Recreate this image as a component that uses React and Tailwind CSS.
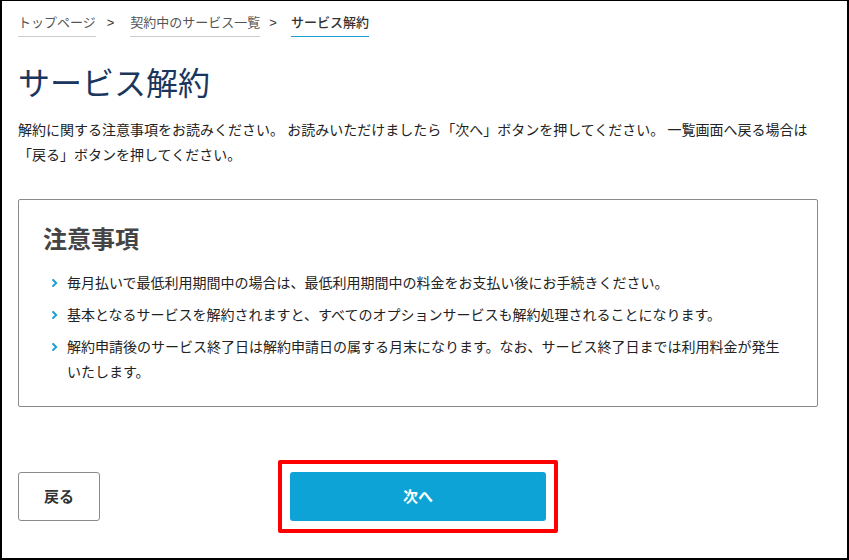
import React from 'react'

const NOTES = [
  '毎月払いで最低利用期間中の場合は、最低利用期間中の料金をお支払い後にお手続きください。',
  '基本となるサービスを解約されますと、すべてのオプションサービスも解約処理されることになります。',
  '解約申請後のサービス終了日は解約申請日の属する月末になります。なお、サービス終了日までは利用料金が発生いたします。',
]

function Chevron() {
  return (
    <svg width="6" height="8" viewBox="0 0 6 8" fill="none" className="mt-[9px] ml-[9px] mr-[9px] flex-shrink-0">
      <path d="M1.2 1l3 3-3 3" stroke="#1a9ed6" strokeWidth="1.9" strokeLinecap="square" />
    </svg>
  )
}

function Breadcrumb() {
  return (
    <nav className="flex items-end pt-[11px] text-[13px] leading-5">
      <span className="pb-1 border-b border-[#cccccc] text-[#555]">トップページ</span>
      <span className="pb-1 ml-[11px] mr-[16px] font-['Liberation_Sans',sans-serif] text-[#333]">&gt;</span>
      <span className="pb-1 border-b border-[#cccccc] text-[#555]">契約中のサービス一覧</span>
      <span className="pb-1 ml-[9px] mr-[14px] font-['Liberation_Sans',sans-serif] text-[#333]">&gt;</span>
      <span className="pb-1 border-b border-[#1a9ed6] text-[#333] font-medium">サービス解約</span>
    </nav>
  )
}

export default function App() {
  return (
    <div className="w-[849px] h-[560px] overflow-hidden bg-white border-t border-l-2 border-r-2 border-b-2 border-black font-['Noto_Sans_CJK_JP','Noto_Sans',sans-serif]">
      <div className="ml-4 w-[800px]">
        <Breadcrumb />

        <h1 className="mt-5 text-[32px] leading-[48px] font-normal text-[#1b365d]">サービス解約</h1>

        <p className="mt-3 text-[14px] leading-[25px] text-[#222]">
          解約に関する注意事項をお読みください。 お読みいただけましたら「次へ」ボタンを押してください。 一覧画面へ戻る場合は「戻る」ボタンを押してください。
        </p>

        <section className="mt-8 border border-[#8a8a8a] rounded-[2px] px-6 pt-5 pb-[22px]">
          <h2 className="text-[24px] leading-9 font-bold text-[#444]">注意事項</h2>
          <ul className="mt-[14px] flex flex-col gap-[7px]">
            {NOTES.map(note => (
              <li key={note} className="flex items-start text-[14px] leading-[25px] text-[#222]">
                <Chevron />
                <span>{note}</span>
              </li>
            ))}
          </ul>
        </section>

        <div className="mt-[53px] grid grid-cols-[1fr_auto_1fr] items-center">
          <button className="justify-self-start w-[82px] h-[49px] border border-[#8a8a8a] rounded-[3px] bg-white text-[15px] font-bold text-[#333]">
            戻る
          </button>
          <div className="border-4 border-[#ff0000] rounded-[2px] p-2">
            <button className="w-[256px] h-[49px] rounded-[3px] bg-[#0ea3d6] text-[15px] font-bold text-white">
              次へ
            </button>
          </div>
          <div />
        </div>
      </div>
    </div>
  )
}
